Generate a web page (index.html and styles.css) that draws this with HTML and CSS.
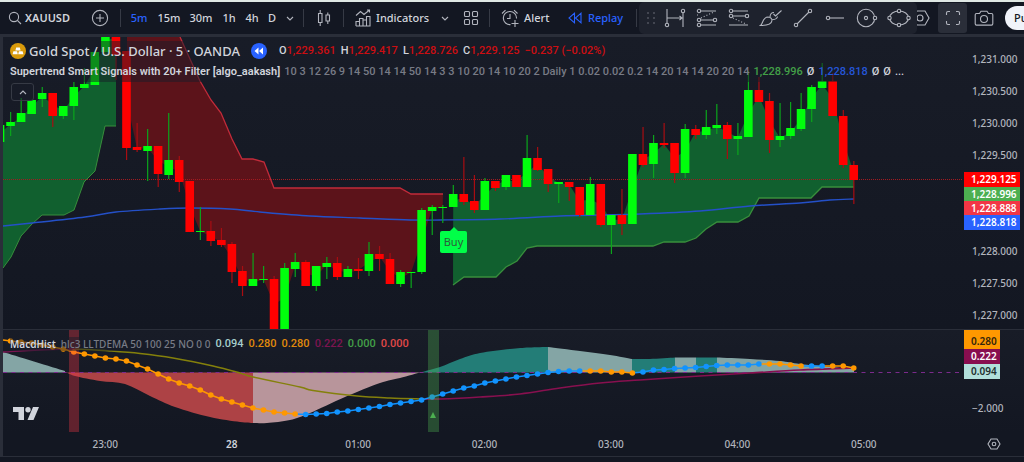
FILE: index.html
```html
<!DOCTYPE html>
<html lang="en">
<head>
<meta charset="utf-8">
<title>XAUUSD chart</title>
<link rel="stylesheet" href="styles.css">
</head>
<body>
<header class="toolbar">
  <button class="tool symbol"><svg class="icon" width="14" height="14" viewBox="0 0 14 14"><circle cx="6" cy="6" r="4.6"/><path d="M9.4 9.4 13 13"/></svg><b>XAUUSD</b></button>
  <button class="tool add" aria-label="Compare"><svg class="icon" width="18" height="18" viewBox="0 0 18 18"><circle cx="9" cy="9" r="7.6"/><path d="M9 5v8M5 9h8"/></svg></button>
  <span class="divider"></span>
  <nav class="frames">
    <button class="tool w28 active">5m</button><button class="tool w32">15m</button><button class="tool w32">30m</button><button class="tool w24">1h</button><button class="tool w22">4h</button><button class="tool w18">D</button>
    <button class="tool w18" aria-label="More intervals"><svg class="icon" width="8" height="5" viewBox="0 0 8 5"><path d="M1 1l3 3 3-3"/></svg></button>
  </nav>
  <span class="divider"></span>
  <button class="tool w31" aria-label="Chart style"><svg class="icon" width="14" height="18" viewBox="0 0 14 18"><path d="M1.500 4.500h3.500v9H1.500zM3.200 1v3.500M3.200 13.500V17M9 6h3.500v6H9zM10.800 3.500V6M10.800 12v3"/></svg></button>
  <span class="divider"></span>
  <button class="tool indicators"><svg class="icon" width="16" height="18" viewBox="0 0 16 18"><path d="M1 6.500 5.500 2.500 9 5.500 14.500 1M12 1h2.500v2.500M1 17v-4.500h3.500V17M4.500 17V9.500H8V17M8 17v-6h3.500v6M11.500 17V7.500H15V17zM1 17h14"/></svg>Indicators</button>
  <button class="tool w24" aria-label="Favourite indicators"><svg class="icon" width="8" height="5" viewBox="0 0 8 5"><path d="M1 1l3 3 3-3"/></svg></button>
  <button class="tool w28" aria-label="Templates"><svg class="icon" width="16" height="16" viewBox="0 0 16 16"><rect x="1.500" y="1.500" width="5" height="5" rx="1"/><rect x="9.500" y="1.500" width="5" height="5" rx="1"/><rect x="1.500" y="9.500" width="5" height="5" rx="1"/><rect x="9.500" y="9.500" width="5" height="5" rx="1"/></svg></button>
  <span class="divider"></span>
  <button class="tool alert"><svg class="icon" width="18" height="18" viewBox="0 0 18 18"><path d="M15.500 9.500A6.600 6.600 0 1 0 9.500 15.600M9 5v4.500H6M1 4.500 4.500 1.200M13 1.200l3.500 3.300M14 11v7M10.500 14.500h7"/></svg>Alert</button>
  <button class="tool replay"><svg class="icon" width="14" height="12" viewBox="0 0 14 12"><path d="M6.500 1.200v9.600L1 6zM13 1.200v9.600L7.500 6z"/></svg>Replay</button>
  <span class="divider"></span>
  <div class="right">
    <button class="tool" aria-label="Settings"><svg class="icon" width="18" height="18" viewBox="0 0 18 18"><path d="M5 2h8l4 7-4 7H5L1 9z"/><circle cx="8" cy="9" r="3"/></svg></button>
    <button class="tool full" aria-label="Fullscreen"><svg class="icon" width="16" height="16" viewBox="0 0 16 16"><path d="M1.500 5V3q0-1.500 1.500-1.500h2M11 1.500h2q1.500 0 1.500 1.500v2M14.500 11v2q0 1.500-1.500 1.500h-2M5 14.500H3q-1.500 0-1.500-1.500v-2"/></svg></button>
    <button class="tool" aria-label="Snapshot"><svg class="icon" width="20" height="17" viewBox="0 0 20 17"><path d="M2.500 3.500h3L7 1.300h6l1.500 2.200h3q1.300 0 1.300 1.300v9q0 1.300-1.300 1.300h-15q-1.300 0-1.300-1.300v-9q0-1.300 1.300-1.300z"/><circle cx="10" cy="9" r="3.500"/></svg></button>
    <button class="publish">Publish</button>
  </div>
  <div class="drawbar">
    <svg class="grip" width="10" height="14" viewBox="0 0 10 14"><path d="M1 2h2M7 2h2M1 7h2M7 7h2M1 12h2M7 12h2"/></svg>
    <button class="tool" aria-label="Date range"><svg class="icon" width="22" height="20" viewBox="0 0 22 20"><path d="M3 1v14.500M19 5v14M3 10h15M15.500 8l2.500 2-2.500 2"/><circle cx="3" cy="17" r="1.700"/><circle cx="19" cy="3" r="1.700"/></svg></button>
    <button class="tool" aria-label="Fib retracement"><svg class="icon" width="22" height="20" viewBox="0 0 22 20"><path d="M5 3h15M1 7h1M5 12h12M5 17h15"/><circle cx="3" cy="3" r="1.700"/><circle cx="3" cy="12" r="1.700"/><circle cx="19" cy="12" r="1.700"/><circle cx="3" cy="17" r="1.700"/><path class="dots" d="M5 10 18 4"/></svg></button>
    <button class="tool" aria-label="Fib extension"><svg class="icon" width="22" height="20" viewBox="0 0 22 20"><path d="M5 3h15M5 8h12M1 17h19"/><circle cx="3" cy="3" r="1.700"/><circle cx="3" cy="8" r="1.700"/><circle cx="19" cy="8" r="1.700"/><path class="dots" d="M5 10 18 16"/></svg></button>
    <button class="tool" aria-label="Brush"><svg class="icon" width="24" height="20" viewBox="0 0 24 20"><path d="M1.500 17.500C4 16 3.500 9 9 9q4 .5 4 3.500C12.500 17 6 17.500 1.500 17.500zM11 9.500q0-5 4-5M13.500 11.500q4.500 0 5-3M14.500 6l2 2 6-5.500"/></svg></button>
    <button class="tool" aria-label="Trend line"><svg class="icon" width="20" height="20" viewBox="0 0 20 20"><path d="M4 16 16 4"/><circle cx="3" cy="17" r="1.700"/><circle cx="17" cy="3" r="1.700"/></svg></button>
    <button class="tool" aria-label="Horizontal ray"><svg class="icon" width="20" height="20" viewBox="0 0 20 20"><path d="M5 10h14"/><circle cx="3" cy="10" r="1.700"/></svg></button>
    <button class="tool" aria-label="Circle"><svg class="icon" width="22" height="20" viewBox="0 0 22 20"><circle cx="10" cy="10" r="8.700"/><circle cx="10" cy="10" r="1.600"/><circle class="node" cx="19" cy="10" r="1.700"/></svg></button>
    <button class="tool" aria-label="Ellipse"><svg class="icon" width="24" height="20" viewBox="0 0 24 20"><ellipse cx="12" cy="10" rx="9.500" ry="7"/><circle class="node" cx="2.500" cy="10" r="1.700"/><circle class="node" cx="21.500" cy="10" r="1.700"/><circle class="node" cx="12" cy="3" r="1.700"/><circle class="node" cx="12" cy="17" r="1.700"/></svg></button>
  </div>
</header>
<main class="chart">
  <section class="pane price-pane">
    <svg class="plot" id="price" viewBox="0 37 960 292" preserveAspectRatio="none"></svg>
    <div class="legend">
      <div class="row title">
        <svg width="16" height="16" viewBox="0 0 16 16"><circle cx="8" cy="8" r="8" fill="#d99a0b"/><path d="M6.200 4.500h3.600l.8 3H5.400zM3.400 8.300h3.700l.7 3H2.600zM8.900 8.300h3.700l.8 3H8.200z" fill="#fff"/></svg>
        <h1>Gold Spot / U.S. Dollar · 5 · OANDA</h1>
        <svg class="rewind" width="16" height="16" viewBox="0 0 16 16"><circle cx="8" cy="8" r="8" fill="#2962ff"/><path d="M7.500 4.500v7L3.500 8zM12 4.500v7L8 8z" fill="#fff"/></svg>
        <p class="ohlc"><span>O<i>1,229.361</i></span><span>H<i>1,229.417</i></span><span>L<i>1,228.726</i></span><span>C<i>1,229.125</i></span><i>−0.237 (−0.02%)</i></p>
      </div>
      <p class="row study"><b>Supertrend Smart Signals with 20+ Filter [algo_aakash]</b><span class="args">10 3 12 26 9 14 50 14 14 50 14 3 3 10 20 14 10 20 2 Daily 1 0.02 0.02 0.2 14 20 14 14 20 20 14</span><span class="green">1,228.996</span><span>Ø</span><span class="blue">1,228.818</span><span>Ø</span><span>Ø</span><span>...</span></p>
    </div>
    <button class="collapse" aria-label="Collapse legend"><svg class="icon" width="8" height="5" viewBox="0 0 8 5"><path d="M1 4l3-3 3 3"/></svg></button>
    <span class="buy">Buy</span>
  </section>
  <aside class="axis price-axis">
    <span>1,231.000</span><span>1,230.500</span><span>1,230.000</span><span>1,229.500</span>
    <div class="tags"><b class="red">1,229.125</b><b class="green">1,228.996</b><b class="rose">1,228.888</b><b class="blue">1,228.818</b></div>
    <span>1,228.000</span><span>1,227.500</span><span>1,227.000</span>
  </aside>
  <section class="pane macd-pane">
    <svg class="plot" id="macd" viewBox="0 330 960 102" preserveAspectRatio="none"></svg>
    <p class="macd-legend"><b>MacdHist</b><span class="args">hlc3 LLTDEMA 50 100 25 NO 0 0</span><span class="value mint">0.094</span><span class="value orange">0.280</span><span class="value orange">0.280</span><span class="value maroon">0.222</span><span class="value green">0.000</span><span class="value coral">0.000</span></p>
    <svg class="logo" width="26" height="14" viewBox="0 0 26 14"><path d="M0 0h11v13H5.500V5H0zM20 0h6l-5.500 13h-6z"/><circle cx="15" cy="2.700" r="2.700"/></svg>
  </section>
  <aside class="axis macd-axis">
    <div class="tags"><b class="orange">0.280</b><b class="orange">0.280</b><b class="maroon">0.222</b><b class="mint">0.094</b></div>
    <span>−2.000</span>
  </aside>
  <footer class="times"><span>23:00</span><b>28</b><span>01:00</span><span>02:00</span><span>03:00</span><span>04:00</span><span>05:00</span></footer>
  <button class="gear" aria-label="Axis settings"><svg class="icon" width="14" height="12" viewBox="0 0 14 12"><path d="M4 1h6l3 5-3 5H4L1 6z"/><circle cx="7" cy="6" r="1.800"/></svg></button>
</main>
<script src="script.js"></script>
</body>
</html>
```
FILE: styles.css
```css
* { box-sizing: border-box; }
body {
  margin: 0;
  background: #131722;
  color: #d1d4dc;
  font: 10px/14px "Noto Sans", "Open Sans", sans-serif;
  overflow: hidden;
}
h1, p { margin: 0; font-weight: 500; }
button { margin: 0; padding: 0; border: 0; background: none; color: inherit; font: inherit; }
i { font-style: normal; }
b { font-weight: 600; }
.icon { fill: none; stroke: #b2b5be; stroke-width: 1.1; flex: none; }
.icon .dots { stroke-dasharray: 1 2; }

.toolbar {
  position: relative;
  display: flex;
  align-items: center;
  height: 37px;
  border-top: 2px solid #dfe8e4;
  border-bottom: 3px solid #2a2e39;
  background: #131722;
  font-size: 11px;
  font-weight: 500;
}
.tool { display: inline-flex; align-items: center; justify-content: center; height: 30px; flex: none; }
.symbol { gap: 3px; padding-left: 8px; width: 84px; justify-content: flex-start; }
.add { width: 32px; }
.divider { width: 1px; height: 18px; margin: 0 4px; background: #363a45; flex: none; }
.frames { display: flex; }
.w18 { width: 18px; }
.w22 { width: 22px; }
.w24 { width: 24px; }
.w28 { width: 28px; }
.w31 { width: 31px; }
.w32 { width: 32px; }
.active { color: #2962ff; }
.indicators { gap: 5px; width: 85px; padding-left: 7px; justify-content: flex-start; }
.alert { gap: 5px; width: 70px; padding-left: 7px; justify-content: flex-start; }
.replay { gap: 6px; width: 68px; padding-left: 4px; justify-content: flex-start; color: #2962ff; }
.replay .icon { stroke: #2962ff; }
.right { display: flex; align-items: center; margin-left: auto; }
.full { width: 29px; margin: 0 7px 0 8px; border-radius: 3px; background: #2a2e39; }
.publish { width: 19px; height: 24px; margin-left: 11px; padding-left: 9px; overflow: hidden; border-radius: 12px 0 0 12px; background: #f0f3fa; color: #131722; text-align: left; }
.drawbar {
  position: absolute;
  left: 639px;
  top: 0;
  display: flex;
  align-items: center;
  width: 278px;
  height: 32px;
  padding-left: 7px;
  border-radius: 5px;
  background: #1e222d;
}
.drawbar .tool { width: 32px; }
.drawbar .grip { margin-right: 3px; fill: none; stroke: #50535e; stroke-width: 1.5; }
.drawbar .node { fill: #1e222d; }

.chart {
  display: grid;
  grid-template-columns: 1fr 61px;
  grid-template-rows: 293px 102px 24px;
  border-left: 3px solid #2a2e39;
  border-bottom: 1px solid #2a2e39;
}
.pane { position: relative; overflow: hidden; }
.price-pane, .price-axis { border-bottom: 1px solid #2a2e39; background: linear-gradient(#181c27, #131722); }
.macd-pane, .macd-axis { background: linear-gradient(#181c27, #131722); }
.plot { display: block; width: 100%; height: 100%; }
.legend { position: absolute; left: 7px; top: 4px; }
.row { display: flex; align-items: center; width: max-content; }
.title { height: 20px; background: rgba(24, 28, 39, 0.5); }
.title h1 { margin-left: 3px; font-size: 13px; color: #d1d4dc; }
.rewind { margin-left: 11px; }
.ohlc { display: flex; gap: 5px; margin-left: 12px; }
.ohlc i { color: #cc0e12; }
.study { height: 21px; gap: 4px; background: rgba(24, 28, 39, 0.5); }
.ohlc, .study, .value { font-family: Roboto, "Noto Sans", sans-serif; font-size: 11px; }
.args { color: #787b86; }
.legend .green, .macd-legend .green { color: #43a047; }
.legend .blue { color: #2556d8; }
.collapse { position: absolute; left: 8px; top: 46px; width: 23px; height: 18px; border: 1px solid #363a45; border-radius: 3px; background: rgba(24, 28, 39, 0.5); display: grid; place-items: center; }
.buy { position: absolute; left: 437px; top: 194px; width: 27px; height: 22px; border-radius: 2px; background: #00ff48; color: #2c5b3c; font-size: 11px; line-height: 22px; text-align: center; }
.buy::before { content: ""; position: absolute; left: 9px; top: -4px; border: 5px solid transparent; border-top: 0; border-bottom-color: #00ff48; }

.axis { display: flex; flex-direction: column; overflow: hidden; color: #b2b5be; font-weight: 500; }
.axis > span { height: 32px; line-height: 32px; padding-left: 9px; flex: none; }
.price-axis { padding-top: 6px; }
.tags { width: 56px; margin-left: 1px; }
.tags b { display: block; height: 15px; padding-left: 7px; line-height: 15px; color: #fff; }
.price-axis .tags { height: 58px; margin-top: 1px; margin-bottom: 5px; overflow: hidden; flex: none; }
.tags .red { background: #ff0000; }
.tags .green { background: #4caf50; height: 14px; }
.tags .rose { background: #f23645; height: 14px; }
.tags .blue { background: #2962ff; }
.macd-axis .tags { width: 36px; margin-top: -11px; }
.tags .orange { background: #ff9800; color: #33260d; }
.tags .maroon { background: #880e4f; }
.tags .mint { background: #b2dfdb; color: #22302f; }
.macd-axis > span { margin-top: 13px; }

.macd-legend { position: absolute; left: 7px; top: 7px; display: flex; align-items: center; gap: 5px; background: rgba(24, 28, 39, 0.5); }
.macd-legend .mint { color: #a6cfcc; }
.macd-legend .orange { color: #e08a0b; }
.macd-legend .maroon { color: #7d1450; }
.macd-legend .coral { color: #e04848; }
.logo { position: absolute; left: 10px; top: 77px; fill: #d1d4dc; }
.times { display: grid; grid-template-columns: repeat(7, 1fr); padding: 0 36px 0 39px; line-height: 24px; color: #b2b5be; font-weight: 500; text-align: center; }
.times b { color: #d1d4dc; }
.gear { display: grid; place-items: center; width: 62px; }
```
FILE: script.js
```js
const STEP = 10.54, ORIGIN = 102.4;
const px = k => ORIGIN + k * STEP;

// direction, body top, body bottom, wick top, wick bottom
const candles = `G 125 142 125 142|G 122 126 112 136|G 113 122 98 122|G 100 114 100 114|G 93 99 87 107|R 93 116 93 127|G 106 116 106 119|G 87 106 82 120|G 84 88 68 88|G 52 85 52 85|G 30 52 30 52|R 30 55 30 80|R 51 148 51 160|R 147 150 123 152|G 146 151 129 181|R 146 174 146 187|G 160 175 113 179|R 160 182 156 192|R 181 232 181 232|G 231 232 207 240|R 231 241 221 246|R 240 245 228 247|R 244 272 242 283|R 271 286 266 296|G 279 286 253 286|G 279 280 266 283|R 279 329 276 329|G 268 329 263 329|G 262 269 253 277|R 262 286 260 286|G 266 286 266 291|G 263 267 257 279|R 263 277 257 280|G 269 277 266 277|R 269 271 258 279|G 254 271 242 276|R 254 259 246 271|R 259 284 253 284|G 272 284 270 287|G 272 273 272 288|G 210 272 208 274|G 207 211 205 235|G 207 208 205 223|G 194 207 185 207|R 194 202 157 205|R 201 210 175 213|G 181 210 178 210|R 181 188 181 191|G 175 187 175 190|R 175 187 175 187|G 158 187 135 187|R 158 170 147 171|R 169 184 169 192|G 182 184 182 203|R 182 187 182 201|R 187 215 187 217|G 184 215 177 215|R 184 225 184 227|G 215 225 215 254|R 215 224 189 235|G 154 224 154 224|R 154 165 127 167|G 143 164 135 178|R 143 145 123 148|R 143 173 143 183|G 129 173 124 178|R 129 135 125 139|G 127 135 110 139|G 125 128 104 134|R 125 139 122 159|G 136 139 123 155|G 90 137 71 137|R 90 102 77 102|R 101 140 93 153|G 136 140 103 147|G 128 136 102 139|G 109 129 93 131|G 87 109 85 122|G 81 88 63 88|R 81 116 73 116|R 116 165 110 168|R 165 180 161 204`
  .split('|').map((row, n) => {
    const [d, ...v] = row.split(' ');
    return { k: n - 10, x: px(n - 10), up: d === 'G', v: v.map(Number) };
  });

const mids = (a, b) => candles.filter(c => c.k >= a && c.k <= b).map(c => `${c.x},${(c.v[0] + c.v[1]) / 2}`);
const line = (pts, color, w = 1, extra = '') => `<polyline points="${pts}" fill="none" stroke="${color}" stroke-width="${w}" ${extra}/>`;
const area = (pts, color) => `<polygon points="${pts}" fill="${color}"/>`;

// cubic segments through every point
const smooth = str => {
  const p = str.split(' ').map(s => s.split(',').map(Number));
  let d = `${p[0][0]} ${p[0][1]}`;
  for (let i = 0; i < p.length - 1; i++) {
    const a = p[i - 1] || p[i], b = p[i], c = p[i + 1], e = p[i + 2] || c;
    d += `C${b[0] + (c[0] - a[0]) / 6} ${b[1] + (c[1] - a[1]) / 6} ${c[0] - (e[0] - b[0]) / 6} ${c[1] - (e[1] - b[1]) / 6} ${c[0]} ${c[1]}`;
  }
  return d;
};
const curve = (pts, color, w) => `<path d="M${smooth(pts)}" fill="none" stroke="${color}" stroke-width="${w}"/>`;

const upLeft = '0,268 8,257 18,236 29,224 39,215 61,215 71,210 81,182 92,171 102,126 113,126';
const upRight = '450,285 461,277 493,277 503,267 514,261 524,248 534,246 650,246 661,242 682,242 693,238 703,229 714,222 735,222 746,216 756,198 808,198 819,187 851,187';
const down = '177,37 197,81 208,100 218,113 229,139 239,159 250,159 261,162 271,188 397,188 408,194 440,194';
const average = '0,226 29,223 82,217 113,212 157,209 187,208 227,209 257,212 307,216 357,218 407,220 437,220 497,219 557,216 597,215 637,214 697,211 747,206 797,203 827,200 851,199';

let out = area(`${upLeft} 113,37 ${mids(-10, 0).reverse().join(' ')}`, '#11602f')
  + area(`${mids(2, 32).join(' ')} ${down.split(' ').reverse().join(' ')} 124,37`, '#5c131a')
  + area(`${upRight} ${mids(33, 71).reverse().join(' ')}`, '#11602f')
  + line(upLeft, '#388e3c') + line(upRight, '#388e3c', 1.3) + line(down, '#c22b3a', 1.3)
  + curve(average, '#2450c8', 1.4)
  + line('0,179.500 960,179.500', '#a31a20', 1, 'stroke-dasharray="1 1"');
for (const c of candles) {
  const [t, b, wt, wb] = c.v;
  out += `<rect x="${c.x - 0.5}" y="${wt}" width="1.200" height="${wb - wt}" fill="${c.up ? '#0ba51c' : '#a80d12'}"/>`
    + `<rect x="${c.x - 4.3}" y="${t}" width="8.600" height="${b - t}" fill="${c.up ? '#00ff0c' : '#ff0000'}"/>`;
}
document.getElementById('price').innerHTML = out;

const ZERO = 372.5;
const hist = [
  ['0,352 62,371', '#84a5a5'],
  ['63,372 72,376 97,381 122,384 147,396 172,407 207,417 237,422 250,423', '#ad4245'],
  ['250,423 264,423 287,420 307,413 342,397 377,383 397,378 419,372', '#b8959b'],
  ['419,372 437,367 457,359 477,353 507,349 526,347.500 545,347', '#237d77'],
  ['545,347 577,351 607,355 629,359', '#84a5a5'],
  ['629,359 647,359 672,357.500', '#237d77'],
  ['672,357.500 693,357.500', '#84a5a5'],
  ['693,357.500 714,357.500', '#237d77'],
  ['714,357.500 747,359 777,361 797,364 827,367 851,369', '#84a5a5']
];
const dots = '341 342 343 345 347 349 352 354 356 358 359 361 365 369 374 379 383 386 390 395 399 402 405 408 410 412 413 414 414.500 414 413.500 412 411 409.500 408 406.500 404.500 403 401.500 400 397 394 391 388 386 383 381 379 377 375.500 374 372.500 371.500 371 371 371 371 372 372 373 372 370 369.500 368.500 368 367.500 366.500 365.500 365 365 365 364 364 364 365 366 366 366 366 366 368'
  .split(' ').map((y, n) => ({ k: n - 9, x: px(n - 9), y: Number(y) }));
const isBlue = k => (k >= 19 && k <= 45) || (k >= 51 && k <= 62) || k === 67 || k === 68;
const dotColor = k => isBlue(k) ? '#1193ff' : '#ff9800';

out = '';
for (const [pts, color] of hist) {
  const p = pts.split(' ');
  out += `<path d="M${p[0].split(',')[0]} ${ZERO}L${smooth(pts)}V${ZERO}z" fill="${color}"/>`;
}
out += line('0,372.500 960,372.500', '#7b2a8c', 1, 'stroke-dasharray="4 4.500"')
  + curve('0,352 37,350 72,349', '#7a1450', 1.3)
  + curve('72,349 107,351 137,353.500 170,358 210,366 237,373 250,377 297,387 310,390.500 354,396 387,398 419,399', '#84800b', 1.5)
  + curve('419,399 437,399 477,397 517,394 557,388 597,383 637,380 697,376 747,373 797,370 851,368', '#88104f', 1.6);
out += line(`0,340 ${dots[0].x},${dots[0].y}`, '#ff9800', 1.5);
dots.forEach((d, n) => {
  if (n) out += line(`${dots[n - 1].x},${dots[n - 1].y} ${d.x},${d.y}`, dotColor(d.k), 1.5);
});
for (const d of dots) out += `<circle cx="${d.x}" cy="${d.y}" r="2.800" fill="${dotColor(d.k)}"/>`;
out += '<rect x="66" y="330" width="10" height="102" fill="#f23645" fill-opacity=".35"/>'
  + '<rect x="425" y="330" width="11" height="102" fill="#4caf50" fill-opacity=".35"/>'
  + '<path d="M430 412l3 6h-6z" fill="#4caf50"/>';
document.getElementById('macd').innerHTML = out;
```
